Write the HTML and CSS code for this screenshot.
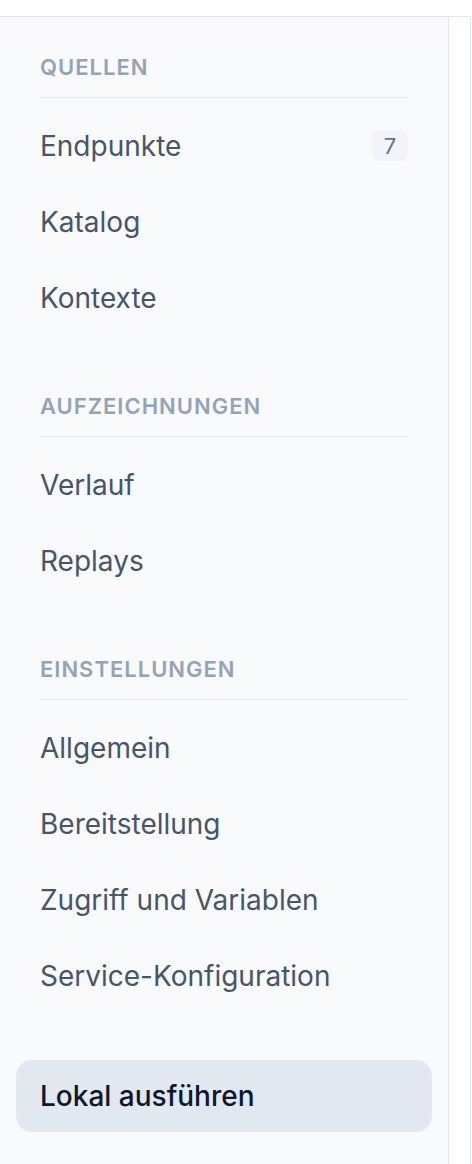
FILE: index.html
```html
<!DOCTYPE html>
<html lang="de">
<head>
<meta charset="utf-8">
<title>Navigation</title>
<link rel="stylesheet" href="styles.css">
</head>
<body>
<div class="frame">
  <aside class="sidebar">
    <section class="group">
      <h2 class="group-title">Quellen</h2>
      <ul class="items">
        <li class="item"><span>Endpunkte</span><span class="badge">7</span></li>
        <li class="item"><span>Katalog</span></li>
        <li class="item"><span>Kontexte</span></li>
      </ul>
    </section>
    <section class="group">
      <h2 class="group-title">Aufzeichnungen</h2>
      <ul class="items">
        <li class="item"><span>Verlauf</span></li>
        <li class="item"><span>Replays</span></li>
      </ul>
    </section>
    <section class="group">
      <h2 class="group-title">Einstellungen</h2>
      <ul class="items">
        <li class="item"><span>Allgemein</span></li>
        <li class="item"><span>Bereitstellung</span></li>
        <li class="item"><span>Zugriff und Variablen</span></li>
        <li class="item"><span>Service-Konfiguration</span></li>
      </ul>
    </section>
    <div class="footer">
      <div class="item active"><span>Lokal ausführen</span></div>
    </div>
  </aside>
  <main class="content"></main>
</div>
</body>
</html>
```

FILE: styles.css
```css
* { box-sizing: border-box; }
html, body { margin: 0; padding: 0; background: #ffffff; }
body {
  font-family: Inter, "Noto Sans", "Liberation Sans", sans-serif;
  padding-top: 16px;
  height: 1164px;
  overflow: hidden;
}
.frame {
  display: flex;
  width: 471px;
  height: 1148px;
  border-top: 1px solid #e2e8f0;
  border-right: 1px solid #e2e8f0;
}
.sidebar {
  width: 449px;
  flex: none;
  background: #f8fafc;
  border-right: 1px solid #e2e8f0;
  padding: 34px 16px 0;
  display: flex;
  flex-direction: column;
}
.content { flex: 1; background: #ffffff; }
.group { margin-bottom: 56px; }
.group:last-of-type { margin-bottom: 48px; }
.group-title {
  margin: 0 24px 12px;
  padding-bottom: 14px;
  border-bottom: 1px solid #e2e8f0;
  font-size: 22px;
  line-height: 32px;
  font-weight: 600;
  letter-spacing: 1px;
  text-transform: uppercase;
  color: #94a3b8;
}
.items {
  list-style: none;
  margin: 0;
  padding: 0;
  display: flex;
  flex-direction: column;
  gap: 4px;
}
.item {
  display: flex;
  align-items: center;
  justify-content: space-between;
  height: 72px;
  padding: 0 24px;
  border-radius: 16px;
  font-size: 28px;
  line-height: 40px;
  color: #475569;
}
.badge {
  display: flex;
  align-items: center;
  justify-content: center;
  width: 36px;
  height: 30px;
  border-radius: 8px;
  background: #f1f5f9;
  color: #64748b;
  font-size: 22px;
  line-height: 30px;
}
.active {
  background: #e2e8f0;
  color: #0f172a;
  font-weight: 500;
}
```
